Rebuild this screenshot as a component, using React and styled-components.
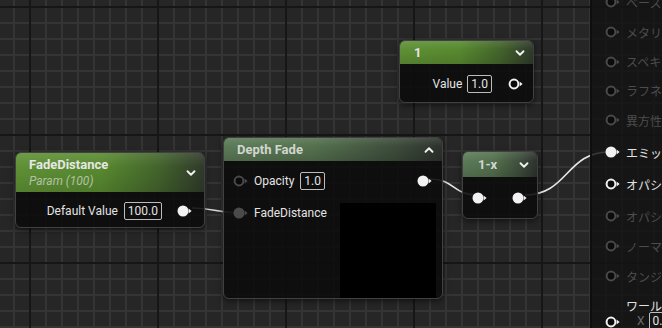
import React from 'react';
import styled, { createGlobalStyle } from 'styled-components';
import { ChevronDown, ChevronUp } from 'lucide-react';

const GlobalStyle = createGlobalStyle`
  html, body {
    margin: 0;
    padding: 0;
    background: #262626;
  }
  body {
    font-family: "Roboto", "Noto Sans CJK JP", sans-serif;
  }
`;

const Canvas = styled.div`
  position: relative;
  width: 662px;
  height: 328px;
  overflow: hidden;
  background-color: #262626;
  background-image:
    linear-gradient(to right, #161616 2px, transparent 2px),
    linear-gradient(to bottom, #161616 2px, transparent 2px),
    linear-gradient(to right, #343434 2px, transparent 2px),
    linear-gradient(to bottom, #343434 2px, transparent 2px);
  background-size: 128px 128px, 128px 128px, 16px 16px, 16px 16px;
  background-position: 29px 0, 0 6px, 13px 0, 0 6px;
  font-family: "Roboto", "Noto Sans CJK JP", sans-serif;
`;

const Wires = styled.svg`
  position: absolute;
  left: 0;
  top: 0;
  width: 662px;
  height: 328px;
  pointer-events: none;
`;

const headerSkins = {
  bright: `
    background:
      linear-gradient(to bottom, rgba(255,255,255,0.10), rgba(0,0,0,0) 35%, rgba(0,0,0,0.12) 100%),
      linear-gradient(to right, #5f9035 0%, #588a30 45%, #44652c 75%, #2f3a2a 100%);
  `,
  muted: `
    background:
      linear-gradient(to bottom, rgba(255,255,255,0.10), rgba(0,0,0,0) 35%, rgba(0,0,0,0.15) 100%),
      linear-gradient(to right, #5c7b58 0%, #55724f 40%, #3e4e3c 78%, #2d322d 100%);
  `,
};

const Node = styled.div`
  position: absolute;
  left: ${(p) => p.$x}px;
  top: ${(p) => p.$y}px;
  width: ${(p) => p.$w}px;
  height: ${(p) => p.$h}px;
  box-sizing: border-box;
  border: 1px solid #404040;
  border-radius: 6px;
  background: rgba(12, 12, 12, 0.9);
  box-shadow: 0 2px 6px rgba(0, 0, 0, 0.55);
  overflow: hidden;
  display: flex;
  flex-direction: column;
`;

const Header = styled.div`
  height: ${(p) => p.$h}px;
  flex: none;
  box-sizing: border-box;
  padding: 0 6px 0 ${(p) => p.$pl || 13}px;
  display: flex;
  align-items: center;
  justify-content: space-between;
  color: #e2e2e2;
  ${(p) => headerSkins[p.$skin]}
`;

const TitleBlock = styled.div`
  display: flex;
  flex-direction: column;
  gap: 2px;
`;

const Title = styled.span`
  font-size: 13px;
  font-weight: 700;
  line-height: 15px;
  color: ${(p) => (p.$dim ? '#d2d6d0' : '#e6e6e6')};
  white-space: nowrap;
`;

const SubTitle = styled.span`
  font-size: 12px;
  font-style: italic;
  line-height: 15px;
  color: #b2c2a4;
`;

const Body = styled.div`
  flex: 1;
  display: flex;
  box-sizing: border-box;
  padding: ${(p) => p.$pad};
  justify-content: ${(p) => p.$justify || 'space-between'};
  align-items: flex-start;
  gap: ${(p) => p.$gap || 0}px;
`;

const Column = styled.div`
  display: flex;
  flex-direction: column;
  align-items: ${(p) => p.$align || 'flex-start'};
  gap: ${(p) => p.$gap || 0}px;
`;

const Row = styled.div`
  height: 18px;
  display: flex;
  align-items: center;
  gap: ${(p) => p.$gap || 6}px;
  margin-right: ${(p) => p.$mr || 0}px;
`;

const Label = styled.span`
  font-size: 12px;
  color: #e4e4e4;
  white-space: nowrap;
`;

const ValueBox = styled.span`
  height: 18px;
  box-sizing: border-box;
  border: 1px solid #bdbdbd;
  border-radius: 2px;
  padding: 0 3px;
  font-size: 12px;
  line-height: 16px;
  color: #e4e4e4;
  margin-right: ${(p) => p.$mr || 0}px;
`;

const Preview = styled.div`
  width: 96px;
  height: 95px;
  background: #000;
`;

const ResultPanel = styled.div`
  position: absolute;
  left: 590px;
  top: -13px;
  width: 200px;
  height: 360px;
  box-sizing: border-box;
  border-left: 2px solid #0e0e0e;
  background: rgba(18, 18, 18, 0.82);
  padding-left: 13px;
  display: flex;
  flex-direction: column;
`;

const PanelRow = styled.div`
  height: ${(p) => p.$h}px;
  display: flex;
  align-items: center;
  gap: 6px;
  font-size: 12px;
  color: ${(p) => (p.$on ? '#e2e2e2' : '#4c4c4c')};
  white-space: nowrap;
`;

const OffsetRow = styled.div`
  display: grid;
  grid-template-columns: 15px auto;
  column-gap: 6px;
  row-gap: 0;
  align-items: center;
  padding-top: 4px;
  font-size: 12px;
  color: #e2e2e2;
  white-space: nowrap;
`;

const OffsetInputs = styled.div`
  display: flex;
  align-items: center;
  gap: 4px;
  padding-left: 11px;
  color: #6a6a6a;
  margin-top: -2px;
`;

const Pin = ({ filled, color = '#f2f2f2' }) => (
  <svg width="15" height="12" viewBox="0 0 15 12" style={{ flex: 'none', display: 'block' }}>
    {filled ? (
      <circle cx="6" cy="6" r="5.5" fill={color} />
    ) : (
      <circle cx="6" cy="6" r="4.4" fill="#0b0b0b" stroke={color} strokeWidth="2" />
    )}
    <path d="M11.6 3.6 L14.6 6 L11.6 8.4 Z" fill={color} />
  </svg>
);

const Chevron = ({ up }) =>
  up ? (
    <ChevronUp size={14} strokeWidth={3.2} color="#f0f0f0" />
  ) : (
    <ChevronDown size={14} strokeWidth={3.2} color="#f0f0f0" />
  );

const outputs = [
  { t: 'ベースカラー', h: 30 },
  { t: 'メタリック', h: 30 },
  { t: 'スペキュラー', h: 29 },
  { t: 'ラフネス', h: 29 },
  { t: '異方性', h: 30 },
  { t: 'エミッシブカラー', h: 34, on: true, filled: true },
  { t: 'オパシティ', h: 30, on: true },
  { t: 'オパシティマスク', h: 34 },
  { t: 'ノーマル', h: 26 },
  { t: 'タンジェント', h: 34 },
];

export default function App() {
  return (
    <>
      <GlobalStyle />
      <Canvas>
        <Wires viewBox="0 0 662 328">
          <defs>
            <linearGradient id="fadeWire" x1="192" y1="0" x2="240" y2="0" gradientUnits="userSpaceOnUse">
              <stop offset="0" stopColor="#f4f4f4" />
              <stop offset="0.55" stopColor="#d8d8d8" />
              <stop offset="1" stopColor="#5a5a5a" />
            </linearGradient>
          </defs>
          <path d="M192 208 C 214 208, 218 213, 240 213" stroke="url(#fadeWire)" strokeWidth="1.6" fill="none" />
          <path d="M430 179 C 455 179, 452 195, 478 195" stroke="#e6e6e6" strokeWidth="1.6" fill="none" />
          <path d="M525 195 C 568 195, 566 152, 609 152" stroke="#e6e6e6" strokeWidth="1.6" fill="none" />
        </Wires>

        <Node $x={399} $y={40} $w={135} $h={63}>
          <Header $h={23} $skin="bright" $pl={14}>
            <Title>1</Title>
            <Chevron />
          </Header>
          <Body $pad="11px 10px 0 0" $justify="flex-end">
            <Row $gap={5}>
              <Label>Value</Label>
              <ValueBox $mr={11}>1.0</ValueBox>
              <Pin />
            </Row>
          </Body>
        </Node>

        <Node $x={15} $y={152} $w={190} $h={76}>
          <Header $h={39} $skin="bright">
            <TitleBlock>
              <Title>FadeDistance</Title>
              <SubTitle>Param (100)</SubTitle>
            </TitleBlock>
            <Chevron />
          </Header>
          <Body $pad="10px 12px 0 0" $justify="flex-end">
            <Row $gap={6}>
              <Label>Default Value</Label>
              <ValueBox $mr={9}>100.0</ValueBox>
              <Pin filled />
            </Row>
          </Body>
        </Node>

        <Node $x={223} $y={137} $w={220} $h={162}>
          <Header $h={23} $skin="muted">
            <Title $dim>Depth Fade</Title>
            <Chevron up />
          </Header>
          <Body $pad="11px 6px 0 9px">
            <Column $gap={14}>
              <Row>
                <Pin color="#4a4a4a" />
                <Label>Opacity</Label>
                <ValueBox>1.0</ValueBox>
              </Row>
              <Row>
                <Pin filled color="#4a4a4a" />
                <Label>FadeDistance</Label>
              </Row>
            </Column>
            <Column $align="flex-end" $gap={13}>
              <Row $mr={4}>
                <Pin filled />
              </Row>
              <Preview />
            </Column>
          </Body>
        </Node>

        <Node $x={462} $y={151} $w={76} $h={68}>
          <Header $h={25} $skin="muted" $pl={15}>
            <Title $dim>1-x</Title>
            <Chevron />
          </Header>
          <Body $pad="12px 10px 0 9px">
            <Row>
              <Pin filled />
            </Row>
            <Row>
              <Pin filled />
            </Row>
          </Body>
        </Node>

        <ResultPanel>
          {outputs.map((o) => (
            <PanelRow key={o.t} $h={o.h} $on={o.on}>
              <Pin filled={o.filled} color={o.on ? '#f2f2f2' : '#4a4a4a'} />
              {o.t}
            </PanelRow>
          ))}
          <OffsetRow>
            <span />
            <span>ワールドポジションオフセット</span>
            <Pin />
            <OffsetInputs>
              X <ValueBox>0.0</ValueBox>
            </OffsetInputs>
          </OffsetRow>
        </ResultPanel>
      </Canvas>
    </>
  );
}
